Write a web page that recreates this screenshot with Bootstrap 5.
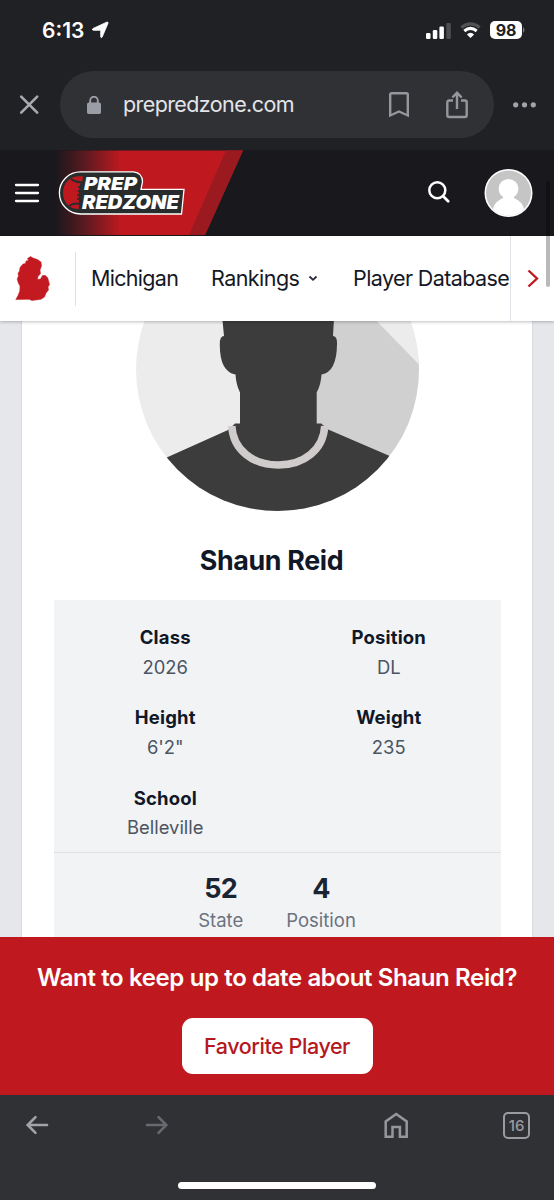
<!DOCTYPE html>
<html lang="en">
<head>
<meta charset="utf-8">
<meta name="viewport" content="width=device-width, initial-scale=1">
<title>Shaun Reid | Prep Redzone</title>
<link href="https://cdn.jsdelivr.net/npm/bootstrap@5.3.0/dist/css/bootstrap.min.css" rel="stylesheet">
<style>
  body { font-family: Inter, "Liberation Sans", sans-serif; background: #e5e7eb; color: #101828; line-height: 1; }
  .screen { width: 554px; height: 1200px; overflow: hidden; }
  svg { display: block; flex: none; }
  .chrome { background: #202124; height: 150px; }
  .status { height: 60px; padding: 0 29px 0 42px; }
  .clock { font-size: 21px; font-weight: 600; width: 42px; }
  .wifi, .battery { margin-left: 9px; }
  .battery { width: 32px; height: 18px; border-radius: 5px; background: #fff; color: #202124; font-size: 16px; font-weight: 700; letter-spacing: -.2px; }
  .battery-tip { margin-left: 1px; }
  .address { height: 67px; margin-top: 11px; padding-left: 18px; }
  .omnibox { width: 434px; height: 67px; background: #303135; border-radius: 34px; color: #e3e4e8; font-size: 21.5px; margin-left: 20px; padding-left: 27px; }
  .url { margin-left: 22px; width: 266px; letter-spacing: -.6px; }
  .share { margin-left: 37px; }
  .dots { margin-left: 19px; }
  .site { height: 86px; background: #18181d; }
  .subnav { height: 85px; background: #fff; font-size: 21.5px; box-shadow: 0 1px 3px rgba(0,0,0,.25); z-index: 2; white-space: nowrap; color: #141826; letter-spacing: -.6px; }
  .subnav .state { width: 76px; height: 54px; border-right: 1px solid #dfe1e6; padding-left: 15px; }
  .item-state { margin-left: 15px; width: 120px; letter-spacing: -.7px; }
  .item-rank { width: 97px; letter-spacing: -.55px; }
  .item-db { margin-left: 35px; width: 157px; }
  .more { width: 44px; border-left: 1px solid #dfe1e6; background: #fff; padding-left: 16px; }
  .thumb { right: 4px; top: 31px; width: 4px; height: 106px; border-radius: 2px; background: linear-gradient(#111114 55px, #b9b9bb 55px); z-index: 3; }
  .profile { width: 512px; height: 616px; border-left: 1px solid #d9dbe0; border-right: 1px solid #d9dbe0; background: #fff; margin-left: 21px; }
  .portrait { margin-left: 114px; }
  .player { font-size: 26.8px; font-weight: 700; letter-spacing: -.33px; margin: 35px 0 0; padding-right: 11px; height: 54px; line-height: 28px; }
  .facts { width: 447px; height: 337px; background: #f2f3f5; margin-left: 31.5px; }
  .facts dl { height: 253px; margin: 0; padding-top: 23px; border-bottom: 1px solid #dfe1e5; }
  .fact { height: 80.4px; }
  .fact dt { font-size: 18.5px; font-weight: 650; line-height: 29.5px; letter-spacing: .16px; }
  .fact dd { font-size: 18.4px; line-height: 29px; margin: 0; color: #4b5563; }
  .ranks { gap: 43px; padding-top: 20px; }
  .rank b { display: block; font-size: 27px; font-weight: 700; color: #1b2432; line-height: 32px; letter-spacing: -.6px; }
  .rank span { font-size: 18.5px; line-height: 30px; color: #6b7280; display: block; }
  .cta { height: 158px; background: #bf191f; color: #fff; z-index: 2; padding-top: 24px; }
  .cta p { font-size: 24px; font-weight: 600; line-height: 33px; margin: 0 0 24px; white-space: nowrap; letter-spacing: -.37px; }
  .cta .btn { width: 191px; height: 56px; border: 0; border-radius: 11px; background: #fff; color: #b5181e; font-size: 21.5px; font-weight: 500; padding: 0; white-space: nowrap; letter-spacing: -.43px; }
  .toolbar { height: 105px; background: #303135; }
  .toolbar .icons { height: 60px; padding: 0 24px 0 25px; }
  .forward { margin-left: 96px; }
  .house { margin-left: 214px; }
  .tabs { width: 27px; height: 27px; border: 2.4px solid #9a9ba1; border-radius: 5px; color: #9a9ba1; font-size: 15px; font-weight: 500; }
  .home-bar { width: 198px; height: 7px; border-radius: 4px; background: #fff; margin-top: 27px; }
</style>
</head>
<body>
<div class="screen">
  <header class="chrome">
    <div class="status d-flex align-items-center text-white">
      <span class="clock">6:13</span>
      <svg class="ms-2" width="17" height="18" viewBox="0 0 17 18"><path d="M1 7.500 14.600 1.200q2-.7 1.300 1.300L10.200 16q-.9 1.600-1.500-.2V9.300H1.500Q-.8 8.800 1 7.500Z" fill="#fff" stroke="#fff" stroke-width=".8"/></svg>
      <svg class="ms-auto" width="25" height="17" viewBox="0 0 25 17"><g fill="#fff"><rect y="11" width="4.500" height="6" rx="1.300"/><rect x="6.800" y="8" width="4.500" height="9" rx="1.300"/><rect x="13.400" y="4.500" width="4.500" height="12.500" rx="1.300"/></g><rect x="20.300" y="1" width="4.500" height="16" rx="1.300" fill="#4d4e51"/></svg>
      <svg class="wifi" width="21" height="17" viewBox="0 0 21 17" fill="none"><path d="M1.300 5.600Q10.500-1.900 19.700 5.600" stroke="#515256" stroke-width="3.200"/><path d="M4.300 9Q10.500 3.800 16.700 9" stroke="#fff" stroke-width="3"/><path d="m6.900 12.500 3.600 3.600 3.600-3.600Q10.500 9 6.900 12.500Z" fill="#fff"/></svg>
      <span class="battery d-flex align-items-center justify-content-center">98</span>
      <svg class="battery-tip" width="2" height="6"><path d="M0 0q3 3 0 6Z" fill="#7d7e81"/></svg>
    </div>
    <div class="address d-flex align-items-center">
      <svg width="22" height="22" viewBox="0 0 22 22" stroke="#a9abb0" stroke-width="2.600" stroke-linecap="round"><path d="m3.200 2.700 16 16m0-16-16 16"/></svg>
      <div class="omnibox d-flex align-items-center">
        <svg width="14" height="18" viewBox="0 0 14 18"><rect y="6.600" width="14" height="11.400" rx="1.800" fill="#9a9da5"/><path d="M3.200 8V4.500a3.800 3.800 0 0 1 7.600 0V8" fill="none" stroke="#9a9da5" stroke-width="1.900"/></svg>
        <span class="url">prepredzone.com</span>
        <svg width="20" height="26" viewBox="0 0 20 26"><path d="M1.200 2.600Q1.200 1.200 2.600 1.200h14.800q1.400 0 1.400 1.400V23.500L10 19.500 1.200 23.500Z" fill="none" stroke="#96979d" stroke-width="2.400"/></svg>
        <svg class="share" width="22" height="28" viewBox="0 0 22 28" fill="none" stroke="#96979d" stroke-width="2.400"><path d="M7 9.500H3.200Q1.300 9.500 1.300 11.500V24q0 2 2 2H18.700q2 0 2-2V11.500q0-2-1.900-2H15M11 18V2M6.300 6.500 11 1.800l4.700 4.700"/></svg>
      </div>
      <svg class="dots" width="23" height="6" fill="#a2a3a8"><circle cx="2.700" cy="2.800" r="2.600"/><circle cx="11.500" cy="2.800" r="2.600"/><circle cx="20.300" cy="2.800" r="2.600"/></svg>
    </div>
  </header>

  <div class="site position-relative">
    <svg width="554" height="86" viewBox="0 150 554 86">
      <defs><linearGradient id="fade" gradientUnits="userSpaceOnUse" x1="55" x2="121" y1="0" y2="0"><stop stop-color="#18181d"/><stop offset=".5" stop-color="#621a20"/><stop offset="1" stop-color="#bf191f"/></linearGradient></defs>
      <path d="M50 150.500H243L205 235H50Z" fill="url(#fade)"/>
      <path d="M226 150.500h17L205 235H189Z" fill="#9b1a1f"/>
      <path d="M16 185h22M16 193h22M16 201h22" stroke="#fff" stroke-width="2.300" stroke-linecap="round"/>
      <path d="M80.500 171.800h53q9 1 9 10l-1.500 7.500H184l-2.500 24.700H80.500a21.100 21.100 0 0 1 0-42.200Z" fill="#292c2c" stroke="#fff" stroke-width="1.300"/>
      <path d="M83 176.500C70 175 63 183 63 193c0 9 6 16 15.500 16l2-14Z" fill="#bf191f"/>
      <path d="M71 179q5 4 12 3M69 206q5-3.500 10-2" fill="none" stroke="#292c2c" stroke-width="2"/>
      <path d="M81.500 183q-2.500 9-1.500 21" fill="none" stroke="#292c2c" stroke-width="2"/>
      <path d="M78 187h5m-5.500 4h5m-5.500 4h5m-5 4h5" stroke="#292c2c" stroke-width="1.500"/>
      <g fill="#fff" font-family="Inter, sans-serif" font-weight="900" font-style="italic">
        <text x="84" y="190" textLength="53" lengthAdjust="spacingAndGlyphs" font-size="18">PREP</text>
        <text x="82" y="209" textLength="97" lengthAdjust="spacingAndGlyphs" font-size="19">REDZONE</text>
      </g>
      <circle cx="437.300" cy="190.200" r="8" fill="none" stroke="#fff" stroke-width="2.500"/><path d="m443.200 196.200 5 5" stroke="#fff" stroke-width="2.800" stroke-linecap="round"/>
      <clipPath id="userclip"><circle cx="508.500" cy="193" r="22.500"/></clipPath>
      <circle cx="508.500" cy="193" r="24" fill="#fff"/>
      <g clip-path="url(#userclip)"><path d="M484 169h49v49h-49Z" fill="#c5c5c5"/><circle cx="508.500" cy="188.800" r="9.900" fill="#fff"/><path d="M503 195v3q-8 3-10.500 12v10h32v-10q-2.500-9-10.500-12v-3Z" fill="#fff"/></g>
    </svg>
    <div class="thumb position-absolute"></div>
  </div>

  <nav class="subnav d-flex align-items-center position-relative">
    <div class="state d-flex align-items-center">
      <svg width="35" height="45" viewBox="15 256 35 45"><path d="M30.500 256.500 27.500 258.500 28.500 260.500 26 261 25.500 263.500 23 264 20 267.500 19.500 271 18 273.500 18.500 276 17.200 279 18.300 283 20 286 19.800 291 18 295.500 15.800 299.500 29 299.300 32 300.500 41 299.300 44.500 297 46 293 48.500 290 48 287 49.500 284.500 47.800 278 45.500 275.500 42.500 275.500 40.500 279 37.700 279.500 37.700 277 40.500 273.500 40 270 41.500 266 41 262 37.500 259.500 33 258Z" fill="#c21a20" stroke="#c21a20" stroke-width=".5"/></svg>
    </div>
    <span class="item-state">Michigan</span>
    <span class="item-rank">Rankings</span>
    <svg width="10" height="7"><path d="m1.500 1.500 3.500 3.300 3.500-3.300" fill="none" stroke="#252936" stroke-width="1.800"/></svg>
    <span class="item-db">Player Database</span>
    <div class="more h-100 d-flex align-items-center"><svg width="12" height="19"><path d="m1.500 1.500 8.500 8-8.500 8" fill="none" stroke="#bf191f" stroke-width="2.400"/></svg></div>
  </nav>

  <main class="profile text-center">
    <svg class="portrait" width="284" height="190" viewBox="136 321 284 190">
      <clipPath id="portrait"><circle cx="277.500" cy="369.500" r="141.500"/></clipPath>
      <g clip-path="url(#portrait)">
        <path d="M130 220h300v300H130Z" fill="#ececec"/>
        <path d="M277 220 430 375v145H277Z" fill="#d0d0d0"/>
        <path d="M374 318h56v58Z" fill="#ececec"/>
        <path d="M221.500 310H334.500l-1.500 26q4.300 0 4 8-.2 28-15.500 30.500-.5 10-4.800 18v31h4.500l7 6 72 31V520H150v-55l78-35 7-6.500h5v-31q-4-8-4.500-18-16-3-15.700-30.500 0-8 4.200-8Z" fill="#3c3c3c"/>
        <path d="M231.800 426C233 450 253 465 278.300 465S323.500 450 324.700 426" fill="none" stroke="#d0cccc" stroke-width="7.500"/>
      </g>
    </svg>
    <h1 class="player">Shaun Reid</h1>
    <section class="facts">
      <dl class="row g-0">
        <div class="fact col-6"><dt>Class</dt><dd>2026</dd></div>
        <div class="fact col-6"><dt>Position</dt><dd>DL</dd></div>
        <div class="fact col-6"><dt>Height</dt><dd>6'2"</dd></div>
        <div class="fact col-6"><dt>Weight</dt><dd>235</dd></div>
        <div class="fact col-6"><dt>School</dt><dd>Belleville</dd></div>
      </dl>
      <div class="ranks d-flex justify-content-center">
        <div class="rank"><b>52</b><span>State</span></div>
        <div class="rank"><b>4</b><span>Position</span></div>
      </div>
    </section>
  </main>

  <aside class="cta text-center position-relative">
    <p>Want to keep up to date about Shaun Reid?</p>
    <button class="btn" type="button">Favorite Player</button>
  </aside>

  <footer class="toolbar">
    <div class="icons d-flex align-items-center">
      <svg width="24" height="20" viewBox="0 0 24 20" fill="none" stroke="#a2a3a8" stroke-width="2.600" stroke-linecap="round"><path d="M22 10H3M10.500 2.200 2.700 10l7.800 7.800"/></svg>
      <svg class="forward" width="24" height="20" viewBox="0 0 24 20" fill="none" stroke="#68696e" stroke-width="2.600" stroke-linecap="round"><path d="M2 10h19M13.500 2.200 21.300 10l-7.800 7.800"/></svg>
      <svg class="house" width="26" height="28" viewBox="0 0 26 28"><path d="M2.700 25.700V10.500L13.200 3l10.500 7.500v15.200H16.900V16H9.500v9.700Z" fill="none" stroke="#96979d" stroke-width="2.500"/></svg>
      <span class="tabs d-flex align-items-center justify-content-center ms-auto">16</span>
    </div>
    <div class="home-bar mx-auto"></div>
  </footer>
</div>
<script src="https://cdn.jsdelivr.net/npm/bootstrap@5.3.0/dist/js/bootstrap.bundle.min.js"></script>
</body>
</html>
